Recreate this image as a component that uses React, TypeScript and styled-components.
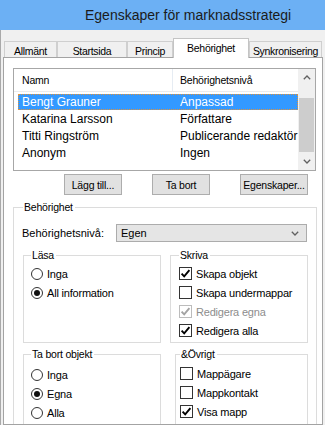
import React from "react";
import styled, { createGlobalStyle } from "styled-components";

const GlobalStyle = createGlobalStyle`
  html, body {
    margin: 0;
    padding: 0;
    background: #fff;
  }
  body {
    font-family: "Liberation Sans", Arial, sans-serif;
    color: #000;
  }
  * {
    box-sizing: border-box;
  }
`;

const Window = styled.div`
  width: 325px;
  height: 425px;
  overflow: hidden;
  display: flex;
  flex-direction: column;
  background: #f0f0f0;
`;

const TitleBar = styled.div`
  height: 30px;
  flex: none;
  display: flex;
  align-items: center;
  padding-left: 85px;
  background: #6cb0f4;
  color: #1b1b1b;
  font-size: 14px;
`;

const Frame = styled.div`
  flex: 1;
  display: flex;
  flex-direction: column;
  border-left: 1px solid #a9a9a9;
  padding: 8px 2px 0 2px;
`;

const TabStrip = styled.div`
  position: relative;
  z-index: 1;
  height: 20px;
  display: flex;
  align-items: flex-end;
  padding-left: 1px;
`;

const Tab = styled.div<{ $active?: boolean; $w: number }>`
  width: ${(p) => p.$w}px;
  height: ${(p) => (p.$active ? 20 : 16)}px;
  margin-bottom: ${(p) => (p.$active ? 0 : 1)}px;
  padding-top: ${(p) => (p.$active ? 3 : 3)}px;
  border: 1px solid ${(p) => (p.$active ? "#c4c4c4" : "#cfcfcf")};
  border-bottom: none;
  background: ${(p) => (p.$active ? "#fff" : "#f0f0f0")};
  text-align: center;
  font-size: 10.5px;
  line-height: 13px;
  letter-spacing: -0.3px;
  white-space: nowrap;
`;

const Panel = styled.div`
  margin-top: -1px;
  width: 320px;
  height: 368px;
  overflow: hidden;
  background: #fff;
  border: 1px solid #a3a3a3;
  padding: 10px 0 0 9px;
`;

const ListBox = styled.div`
  width: 303px;
  height: 103px;
  border: 1px solid #a7a7a7;
  display: flex;
`;

const ListMain = styled.div`
  flex: 1;
  display: flex;
  flex-direction: column;
`;

const ListHeader = styled.div`
  height: 23px;
  display: flex;
  border-bottom: 1px solid #ececec;
  font-size: 10.5px;
  letter-spacing: -0.2px;
`;

const HeaderCell = styled.div<{ $w?: number }>`
  ${(p) => (p.$w ? `width: ${p.$w}px;` : "flex: 1;")}
  display: flex;
  align-items: center;
  padding-left: ${(p) => (p.$w ? 8 : 7)}px;
  ${(p) => (p.$w ? "border-right: 1px solid #e6ecf3;" : "")}
`;

const ListRows = styled.div`
  padding: 2px 0 0 4px;
`;

const ListRow = styled.div<{ $selected?: boolean }>`
  height: 16px;
  margin-bottom: 1px;
  display: flex;
  align-items: center;
  font-size: 12px;
  white-space: nowrap;
  color: ${(p) => (p.$selected ? "#fff" : "#000")};
  background: ${(p) => (p.$selected ? "#3399ff" : "transparent")};
  outline: ${(p) => (p.$selected ? "1px dotted #e0913a" : "none")};
  outline-offset: -1px;
`;

const RowCell = styled.div<{ $w?: number }>`
  ${(p) => (p.$w ? `width: ${p.$w}px;` : "flex: 1;")}
  padding-left: ${(p) => (p.$w ? 4 : 0)}px;
  overflow: hidden;
`;

const ScrollBar = styled.div`
  width: 17px;
  display: flex;
  flex-direction: column;
  background: #f0f0f0;
`;

const ScrollArrow = styled.div`
  height: 17px;
  display: flex;
  align-items: center;
  justify-content: center;
`;

const ScrollTrack = styled.div`
  flex: 1;
  padding: 12px 1px 0 1px;
`;

const ScrollThumb = styled.div`
  height: 54px;
  background: #cdcdcd;
`;

const ButtonRow = styled.div`
  width: 303px;
  margin-top: 3px;
  padding-right: 8px;
  display: flex;
  justify-content: flex-end;
  gap: 30px;
`;

const PushButton = styled.button<{ $w: number }>`
  width: ${(p) => p.$w}px;
  height: 21px;
  padding: 0;
  background: #e1e1e1;
  border: 1px solid #adadad;
  font-family: "Liberation Sans", Arial, sans-serif;
  font-size: 10.5px;
  letter-spacing: -0.2px;
  color: #000;
`;

const GroupBox = styled.fieldset<{ $pl: number; $pt?: number; $indent?: number }>`
  margin: 0 0 0 ${(p) => p.$indent || 0}px;
  min-width: 0;
  border: 1px solid #dcdcdc;
  padding: ${(p) => p.$pt || 0}px 6px 2px ${(p) => p.$pl}px;
`;

const MainGroup = styled(GroupBox)`
  width: 304px;
  margin-top: 6px;
  padding-right: 8px;
`;

const GroupLegend = styled.legend`
  padding: 0 2px 0 1px;
  margin-left: 0;
  font-size: 10.5px;
  line-height: 13px;
  letter-spacing: -0.2px;
`;

const FieldRow = styled.div`
  margin-top: 10px;
  display: flex;
  align-items: center;
`;

const FieldLabel = styled.div`
  width: 94px;
  font-size: 11px;
  margin-left: -1px;
`;

const DropDown = styled.div`
  width: 191px;
  height: 18px;
  border: 1px solid #acacac;
  background: #e5e5e5;
  display: flex;
  align-items: center;
  justify-content: space-between;
  padding: 0 7px 0 4px;
  font-size: 11px;
`;

const SubGrid = styled.div`
  margin-top: 7px;
  display: grid;
  grid-template-columns: 138px 138px;
  column-gap: 9px;
  row-gap: 5px;
`;

const OptionRow = styled.div<{ $disabled?: boolean }>`
  height: 19px;
  display: flex;
  align-items: center;
  gap: 4px;
  font-size: 11px;
  letter-spacing: -0.2px;
  white-space: nowrap;
  color: ${(p) => (p.$disabled ? "#8d8d8d" : "#000")};
`;

const Chevron = ({ up }: { up?: boolean }) => (
  <svg width="8" height="5" viewBox="0 0 8 5">
    <polyline
      points={up ? "0.8,4.2 4,1 7.2,4.2" : "0.8,0.8 4,4 7.2,0.8"}
      fill="none"
      stroke="#606060"
      strokeWidth="1.3"
    />
  </svg>
);

const Radio = ({ checked }: { checked?: boolean }) => (
  <svg width="12" height="12" viewBox="0 0 12 12">
    <circle cx="6" cy="6" r="5.5" fill="#fff" stroke="#333" strokeWidth="1" />
    {checked && <circle cx="6" cy="6" r="3" fill="#111" />}
  </svg>
);

const CheckBox = ({ checked, disabled }: { checked?: boolean; disabled?: boolean }) => (
  <svg width="13" height="13" viewBox="0 0 13 13">
    <rect x="0.5" y="0.5" width="12" height="12" fill="#fff" stroke={disabled ? "#bcbcbc" : "#333"} />
    {checked && (
      <polyline
        points="2.6,6.6 5.2,9.4 10.4,3.2"
        fill="none"
        stroke={disabled ? "#a3a3a3" : "#000"}
        strokeWidth="1.9"
      />
    )}
  </svg>
);

const tabs = [
  { label: "Allmänt", w: 53 },
  { label: "Startsida", w: 70 },
  { label: "Princip", w: 46 },
  { label: "Behörighet", w: 76, active: true },
  { label: "Synkronisering", w: 73 },
];

const users = [
  { name: "Bengt Grauner", level: "Anpassad", selected: true },
  { name: "Katarina Larsson", level: "Författare" },
  { name: "Titti Ringström", level: "Publicerande redaktör" },
  { name: "Anonym", level: "Ingen" },
];

type Opt = { label: string; checked?: boolean; disabled?: boolean };

const readOpts: Opt[] = [{ label: "Inga" }, { label: "All information", checked: true }];
const writeOpts: Opt[] = [
  { label: "Skapa objekt", checked: true },
  { label: "Skapa undermappar" },
  { label: "Redigera egna", checked: true, disabled: true },
  { label: "Redigera alla", checked: true },
];
const deleteOpts: Opt[] = [{ label: "Inga" }, { label: "Egna", checked: true }, { label: "Alla" }];
const otherOpts: Opt[] = [
  { label: "Mappägare" },
  { label: "Mappkontakt" },
  { label: "Visa mapp", checked: true },
];

const RadioGroup = ({ opts }: { opts: Opt[] }) => (
  <>
    {opts.map((o) => (
      <OptionRow key={o.label}>
        <Radio checked={o.checked} />
        {o.label}
      </OptionRow>
    ))}
  </>
);

const CheckGroup = ({ opts }: { opts: Opt[] }) => (
  <>
    {opts.map((o) => (
      <OptionRow key={o.label} $disabled={o.disabled}>
        <CheckBox checked={o.checked} disabled={o.disabled} />
        {o.label}
      </OptionRow>
    ))}
  </>
);

export default function App() {
  return (
    <>
      <GlobalStyle />
      <Window>
        <TitleBar>Egenskaper för marknadsstrategi</TitleBar>
        <Frame>
          <TabStrip>
            {tabs.map((t) => (
              <Tab key={t.label} $w={t.w} $active={t.active}>
                {t.label}
              </Tab>
            ))}
          </TabStrip>
          <Panel>
            <ListBox>
              <ListMain>
                <ListHeader>
                  <HeaderCell $w={159}>Namn</HeaderCell>
                  <HeaderCell>Behörighetsnivå</HeaderCell>
                </ListHeader>
                <ListRows>
                  {users.map((u) => (
                    <ListRow key={u.name} $selected={u.selected}>
                      <RowCell $w={162}>{u.name}</RowCell>
                      <RowCell>{u.level}</RowCell>
                    </ListRow>
                  ))}
                </ListRows>
              </ListMain>
              <ScrollBar>
                <ScrollArrow>
                  <Chevron up />
                </ScrollArrow>
                <ScrollTrack>
                  <ScrollThumb />
                </ScrollTrack>
                <ScrollArrow>
                  <Chevron />
                </ScrollArrow>
              </ScrollBar>
            </ListBox>

            <ButtonRow>
              <PushButton $w={58}>Lägg till...</PushButton>
              <PushButton $w={58}>Ta bort</PushButton>
              <PushButton $w={68}>Egenskaper...</PushButton>
            </ButtonRow>

            <MainGroup $pl={9}>
              <GroupLegend>Behörighet</GroupLegend>
              <FieldRow>
                <FieldLabel>Behörighetsnivå:</FieldLabel>
                <DropDown>
                  Egen
                  <Chevron />
                </DropDown>
              </FieldRow>
              <SubGrid>
                <GroupBox $pl={7} $pt={2}>
                  <GroupLegend>Läsa</GroupLegend>
                  <RadioGroup opts={readOpts} />
                </GroupBox>
                <GroupBox $pl={8} $pt={2}>
                  <GroupLegend>Skriva</GroupLegend>
                  <CheckGroup opts={writeOpts} />
                </GroupBox>
                <GroupBox $pl={7} $pt={4}>
                  <GroupLegend>Ta bort objekt</GroupLegend>
                  <RadioGroup opts={deleteOpts} />
                </GroupBox>
                <GroupBox $pl={4} $pt={3} $indent={5}>
                  <GroupLegend>&amp;Övrigt</GroupLegend>
                  <CheckGroup opts={otherOpts} />
                </GroupBox>
              </SubGrid>
            </MainGroup>
          </Panel>
        </Frame>
      </Window>
    </>
  );
}
